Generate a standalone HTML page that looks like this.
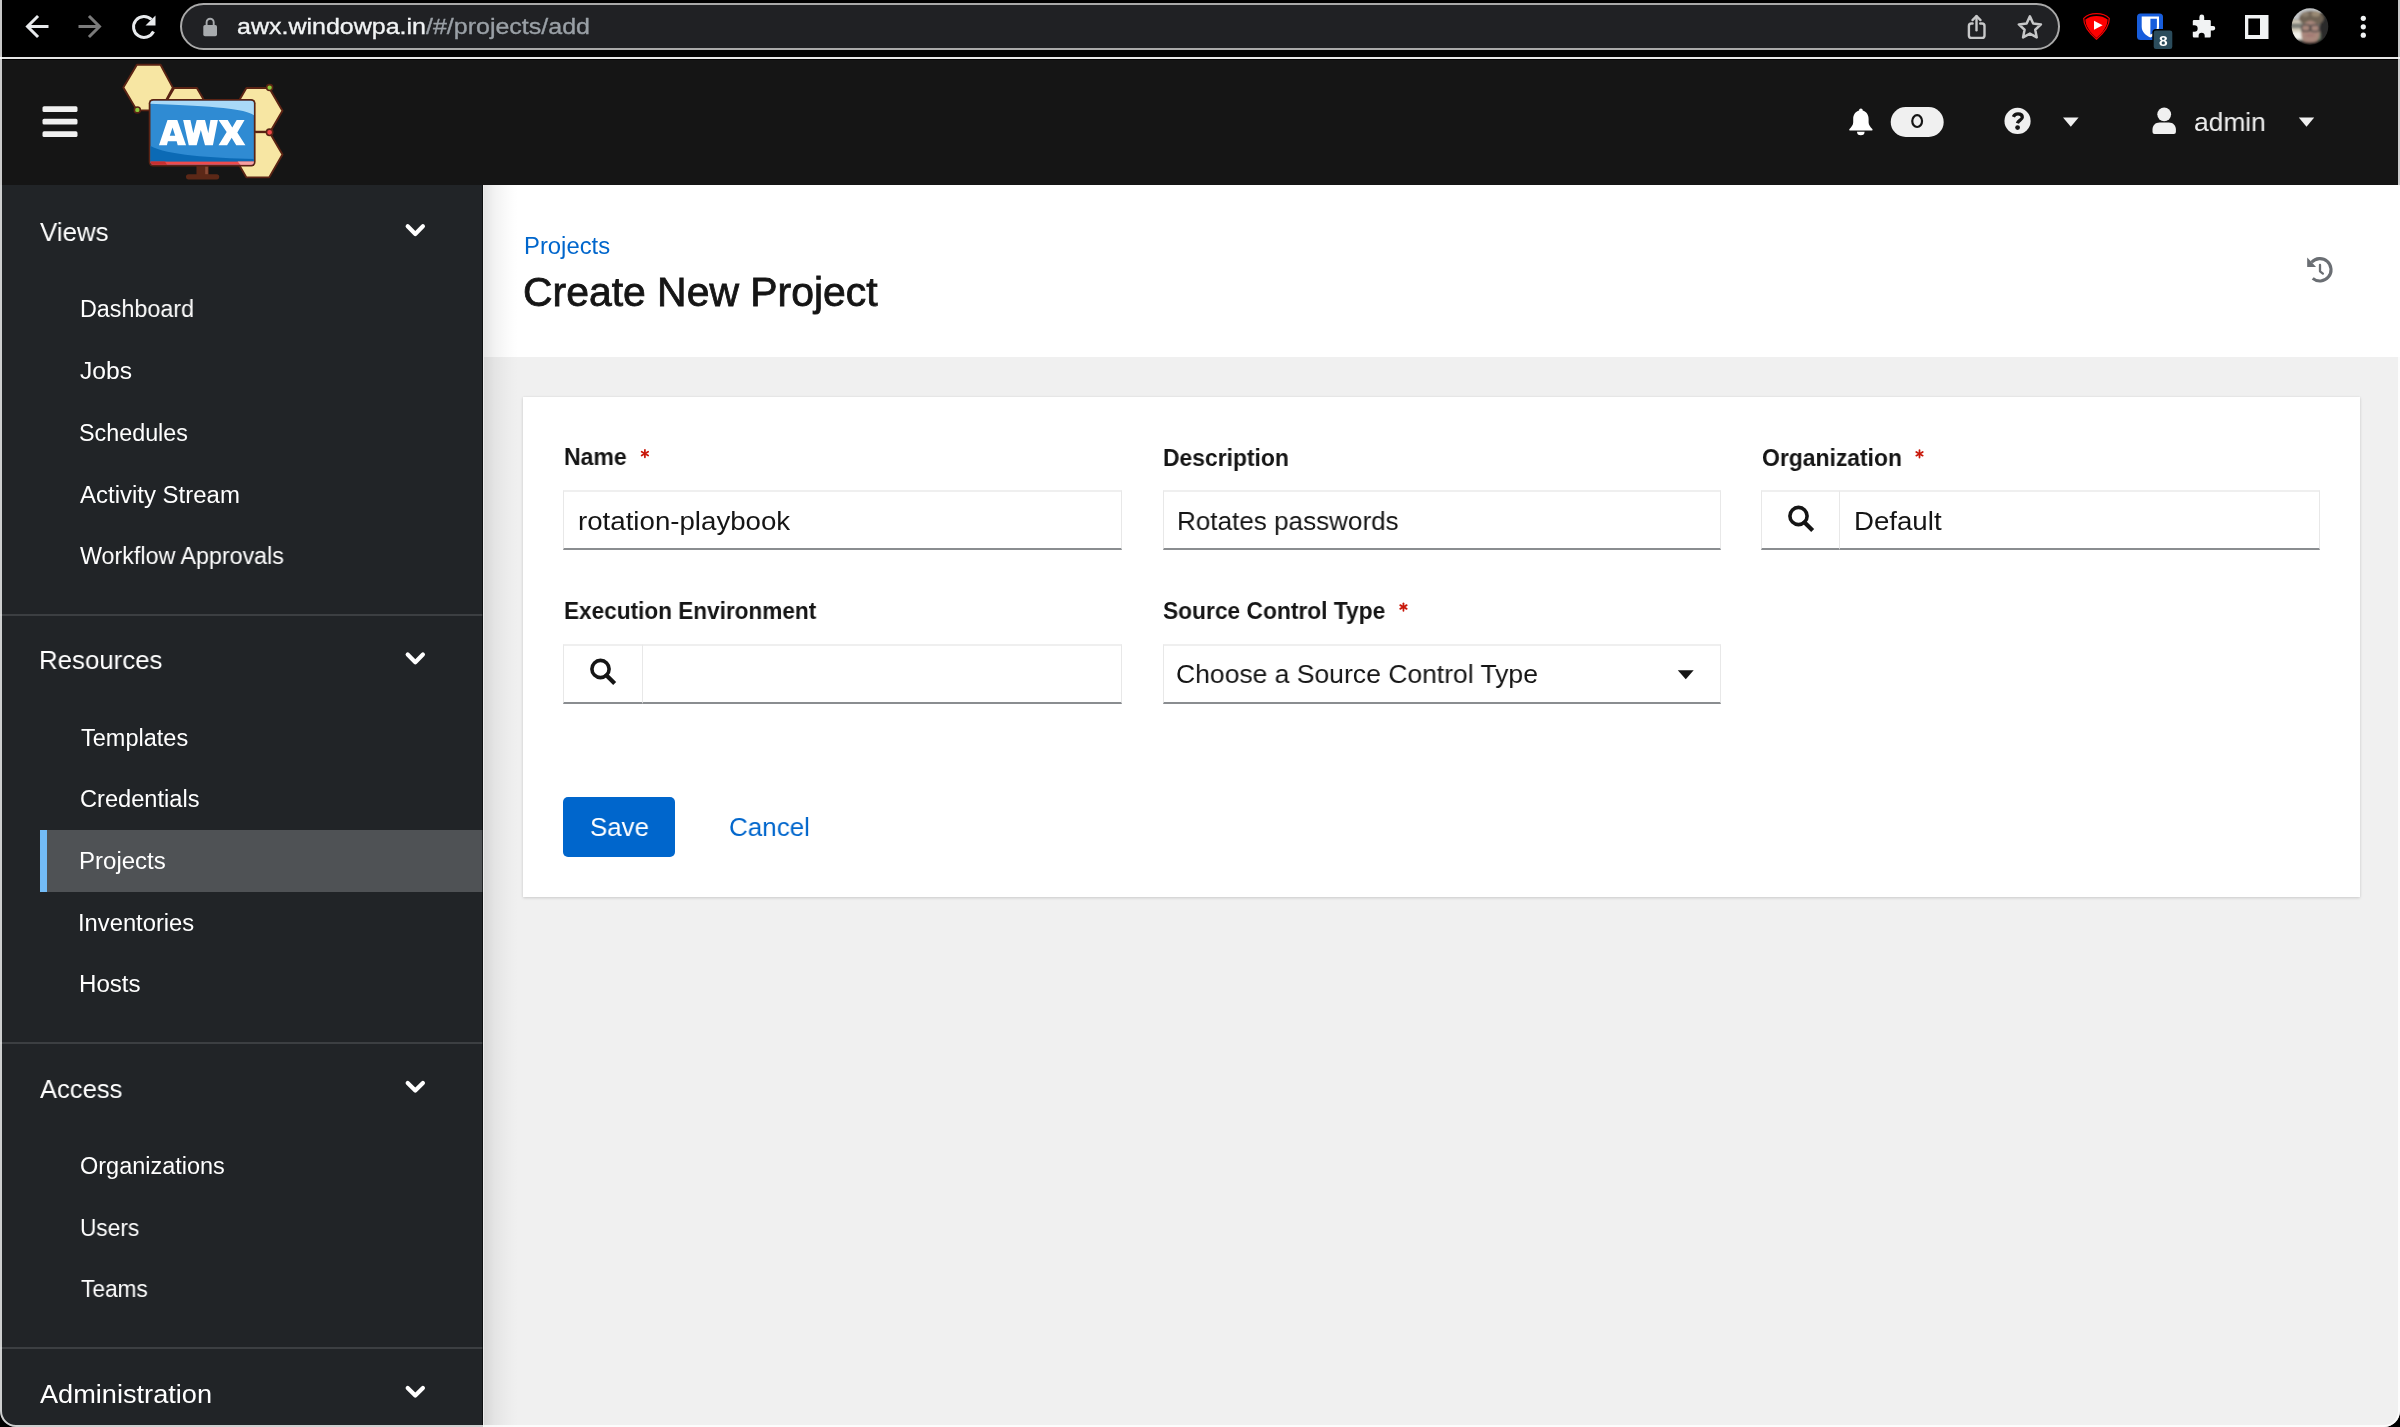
<!DOCTYPE html>
<html><head><meta charset="utf-8">
<style>
html,body{margin:0;padding:0;width:2400px;height:1427px;overflow:hidden;background:#000;}
body{font-family:"Liberation Sans", sans-serif;position:relative;}
.a{position:absolute;}
.t{position:absolute;white-space:nowrap;line-height:1;transform-origin:0 0;will-change:transform;}
svg{position:absolute;overflow:visible;}
</style></head><body>
<div class="a" id="win" style="left:0;top:0;width:2400px;height:1427px;border-radius:0 0 16px 16px;overflow:hidden;background:#000;">
<!-- chrome toolbar -->
<div class="a" style="left:0;top:0;width:2400px;height:57px;background:#000;"></div>
<div class="a" style="left:0;top:57px;width:2400px;height:2px;background:#e6e6e6;"></div>
<!-- url bar -->
<div class="a" style="left:180px;top:3px;width:1880px;height:47px;box-sizing:border-box;border:2px solid #a9a9a9;border-radius:24px;background:#202124;"></div>
<!-- masthead -->
<div class="a" style="left:0;top:60px;width:2400px;height:125px;background:#151515;"></div>
<!-- sidebar -->
<div class="a" style="left:0;top:185px;width:483px;height:1242px;background:#212427;"></div>
<div class="a" style="left:0;top:614px;width:483px;height:2px;background:#3c3f42;"></div>
<div class="a" style="left:0;top:1042px;width:483px;height:2px;background:#3c3f42;"></div>
<div class="a" style="left:0;top:1347px;width:483px;height:2px;background:#3c3f42;"></div>
<div class="a" style="left:40px;top:830px;width:443px;height:62px;background:#4f5255;"></div>
<div class="a" style="left:40px;top:830px;width:7px;height:62px;background:#73bcf7;"></div>
<!-- main -->
<div class="a" style="left:483px;top:185px;width:1917px;height:1242px;background:#f0f0f0;"></div>
<div class="a" style="left:483px;top:185px;width:1917px;height:172px;background:#fff;"></div>
<div class="a" style="left:484px;top:185px;width:34px;height:1242px;background:linear-gradient(to right,rgba(0,0,0,0.11),rgba(0,0,0,0.05) 30%,rgba(0,0,0,0.014) 70%,rgba(0,0,0,0));"></div>
<div class="a" style="left:482px;top:185px;width:1px;height:1242px;background:rgba(0,0,0,0.55);"></div>
<div class="a" style="left:483px;top:185px;width:1px;height:1242px;background:#ececec;"></div>
<!-- card -->
<div class="a" style="left:523px;top:397px;width:1837px;height:500px;background:#fff;box-shadow:0 1px 3px rgba(3,3,3,0.14),0 0 2px rgba(3,3,3,0.06);"></div>
<!-- inputs row1 -->
<div class="a" style="left:563px;top:490px;width:559px;height:60px;box-sizing:border-box;border-top:2px solid #efefef;border-left:1px solid #e8e8e8;border-right:1px solid #e8e8e8;border-bottom:2px solid #8a8d90;background:#fff;"></div>
<div class="a" style="left:1163px;top:490px;width:558px;height:60px;box-sizing:border-box;border-top:2px solid #efefef;border-left:1px solid #e8e8e8;border-right:1px solid #e8e8e8;border-bottom:2px solid #8a8d90;background:#fff;"></div>
<div class="a" style="left:1761px;top:490px;width:79px;height:60px;box-sizing:border-box;border-top:2px solid #efefef;border-left:1px solid #e8e8e8;border-right:1px solid #e8e8e8;border-bottom:2px solid #8a8d90;background:#fff;"></div>
<div class="a" style="left:1839px;top:490px;width:481px;height:60px;box-sizing:border-box;border-top:2px solid #efefef;border-left:1px solid #e8e8e8;border-right:1px solid #e8e8e8;border-bottom:2px solid #8a8d90;background:#fff;"></div>
<!-- inputs row2 -->
<div class="a" style="left:563px;top:644px;width:80px;height:60px;box-sizing:border-box;border-top:2px solid #efefef;border-left:1px solid #e8e8e8;border-right:1px solid #e8e8e8;border-bottom:2px solid #8a8d90;background:#fff;"></div>
<div class="a" style="left:642px;top:644px;width:480px;height:60px;box-sizing:border-box;border-top:2px solid #efefef;border-left:1px solid #e8e8e8;border-right:1px solid #e8e8e8;border-bottom:2px solid #8a8d90;background:#fff;"></div>
<div class="a" style="left:1163px;top:644px;width:558px;height:60px;box-sizing:border-box;border-top:2px solid #efefef;border-left:1px solid #e8e8e8;border-right:1px solid #e8e8e8;border-bottom:2px solid #8a8d90;background:#fff;"></div>
<!-- save -->
<div class="a" style="left:563px;top:797px;width:112px;height:60px;background:#0066cc;border-radius:5px;"></div>

<!-- ICONS -->
<!-- back -->
<svg style="left:0;top:0" width="200" height="57" viewBox="0 0 200 57">
  <g fill="none" stroke="#e8eaed" stroke-width="3" stroke-linecap="square">
    <path d="M47 26.5H28.5"/><path d="M37 17L27.5 26.5L37 36"/>
  </g>
  <g fill="none" stroke="#7b7b7b" stroke-width="3" stroke-linecap="square">
    <path d="M80 26.5H98.5"/><path d="M90 17L99.5 26.5L90 36"/>
  </g>
  <path d="M153.5 31.5A10.5 10.5 0 1 1 151.5 19.5" fill="none" stroke="#e8eaed" stroke-width="3"/>
  <path d="M155.5 15.5V25.5H145.5Z" fill="#e8eaed"/>
  <!-- lock -->
  <rect x="203.3" y="25" width="13.7" height="11.2" rx="1.7" fill="#a8abae"/>
  <path d="M206.6 25.5v-3.2a3.55 3.55 0 0 1 7.1 0v3.2" fill="none" stroke="#a8abae" stroke-width="1.9"/>
</svg>
<!-- share / star -->
<svg style="left:1950px;top:0" width="110" height="57" viewBox="1950 0 110 57">
  <g fill="none" stroke="#c7c8c9" stroke-width="2.4" stroke-linejoin="round" stroke-linecap="round">
    <path d="M1972.6 23.5H1971.4a2.5 2.5 0 0 0-2.5 2.5V35.4a2.5 2.5 0 0 0 2.5 2.5h10.6a2.5 2.5 0 0 0 2.5-2.5V26a2.5 2.5 0 0 0-2.5-2.5H1980.2"/>
    <path d="M1976.5 30.2V16.2"/><path d="M1972.5 20.1L1976.5 16.1L1980.5 20.1"/>
    <path d="M2029.90 16.40L2033.19 23.47L2040.93 24.42L2035.23 29.73L2036.72 37.38L2029.90 33.60L2023.08 37.38L2024.57 29.73L2018.87 24.42L2026.61 23.47Z" stroke-width="2.5"/>
  </g>
</svg>
<!-- extensions -->
<svg style="left:2070px;top:0" width="330" height="57" viewBox="2070 0 330 57">
  <path d="M2096.5 13.7C2101 13.7 2106 15 2109.3 18.3C2109.5 26 2104 33 2096.5 39.3C2089 33 2083.5 26 2083.7 18.3C2087 15 2092 13.7 2096.5 13.7Z" fill="none" stroke="#f20000" stroke-width="1.2"/>
  <path d="M2096.5 15.9C2100.5 15.9 2104.5 16.9 2107.6 19.6C2107.6 26.2 2103 32.5 2096.5 38C2090 32.5 2085.4 26.2 2085.4 19.6C2088.5 16.9 2092.5 15.9 2096.5 15.9Z" fill="#ff0000"/>
  <path d="M2094 20.8L2102.6 25.3L2094 29.8Z" fill="#fff"/>
  <!-- bitwarden -->
  <rect x="2137" y="13.5" width="26" height="26.5" rx="3.5" fill="#175ddc"/>
  <path d="M2141.7 16.4h17.3v10.3c0 5.5-4.6 8.8-8.65 10.8c-4.05-2-8.65-5.3-8.65-10.8z" fill="#fff"/>
  <path d="M2150.4 18.7h6.5v8.3c0 3.4-3 5.8-6.5 7.6z" fill="#175ddc"/>
  <rect x="2153" y="29.8" width="20" height="20" rx="3" fill="#2b4c5c" stroke="#000" stroke-width="1.4"/>
  <!-- puzzle -->
  <path d="M2192.8 21.1a1.2 1.2 0 0 1 1.2-1.2H2199.4V17a2.4 2.4 0 0 1 4.8 0V19.9H2209.6a1.2 1.2 0 0 1 1.2 1.2V26.1H2213.1a2.15 2.15 0 0 1 0 4.3H2210.8V36.3a1.2 1.2 0 0 1-1.2 1.2H2204.7V35.7a3.05 3.05 0 0 0-6.1 0V37.5H2194a1.2 1.2 0 0 1-1.2-1.2V31.7H2194.4a3.25 3.25 0 0 0 0-6.5H2192.8Z" fill="#f1f3f4"/>
  <!-- sidebar -->
  <path d="M2245 15h23.5v24H2245zM2248.3 18.5v16.5H2260V18.5z" fill="#f1f3f4" fill-rule="evenodd"/>
  <!-- avatar -->
  <defs>
    <clipPath id="av"><circle cx="2309.95" cy="26.6" r="18.3"/></clipPath>
    <filter id="avb" x="-10%" y="-10%" width="120%" height="120%"><feGaussianBlur stdDeviation="38"/></filter>
  </defs>
  <g clip-path="url(#av)">
    <g transform="translate(2288 5) scale(0.030836)" filter="url(#avb)">
      <rect x="0" y="0" width="1427" height="1427" fill="#9c978c"/>
      <rect x="0" y="0" width="1427" height="460" fill="#c3c6c8"/>
      <rect x="1030" y="240" width="400" height="1200" fill="#2a2a2a"/>
      <rect x="0" y="500" width="440" height="640" fill="#d6cfbe"/>
      <rect x="0" y="590" width="440" height="170" fill="#7e8179"/>
      <rect x="120" y="880" width="320" height="240" fill="#f2f1ea"/>
      <rect x="920" y="900" width="140" height="260" fill="#6d7d69"/>
      <ellipse cx="760" cy="430" rx="400" ry="240" fill="#6f6355"/>
      <ellipse cx="900" cy="290" rx="140" ry="90" fill="#9a8a74"/>
      <ellipse cx="560" cy="300" rx="120" ry="80" fill="#8d8070"/>
      <ellipse cx="725" cy="900" rx="300" ry="390" fill="#a9877b"/>
      <rect x="440" y="640" width="270" height="210" rx="70" fill="none" stroke="#4e4848" stroke-width="48"/>
      <rect x="740" y="650" width="270" height="210" rx="70" fill="none" stroke="#4e4848" stroke-width="48"/>
      <ellipse cx="720" cy="985" rx="150" ry="32" fill="#a07070"/>
      <path d="M0 1130H420C520 1250 900 1250 1000 1130H1427V1427H0Z" fill="#161616"/>
    </g>
  </g>
  <circle cx="2363.3" cy="18.3" r="2.6" fill="#f1f3f4"/>
  <circle cx="2363.3" cy="26.8" r="2.6" fill="#f1f3f4"/>
  <circle cx="2363.3" cy="35.2" r="2.6" fill="#f1f3f4"/>
</svg>
<!-- bitwarden badge 8 -->
<div class="t" style="left:2159.2px;top:32.8px;font-size:15.5px;font-weight:700;color:#fff;">8</div>

<!-- hamburger -->
<svg style="left:0;top:59px" width="100" height="126" viewBox="0 59 100 126">
  <rect x="42.5" y="106.2" width="35" height="5.8" rx="1.6" fill="#f0f0f0"/>
  <rect x="42.5" y="118.8" width="35" height="5.8" rx="1.6" fill="#f0f0f0"/>
  <rect x="42.5" y="131.3" width="35" height="5.8" rx="1.6" fill="#f0f0f0"/>
</svg>
<!-- logo -->
<svg style="left:115px;top:60px" width="180" height="125" viewBox="0 0 2055 1427">
  <g stroke="#5a2314" stroke-width="22" stroke-linejoin="round" fill="#f7e6a3">
    <path d="M95 315L250 55H520L660 315L520 575H250Z"/>
    <path d="M523 580L675 320H935L1087 580L935 840H675Z"/>
    <path d="M1348 580L1500 320H1760L1912 580L1760 840H1500Z"/>
    <path d="M1348 1080L1500 820H1760L1912 1080L1760 1340H1500Z"/>
  </g>
  <path d="M1605 825H1765" stroke="#5a2314" stroke-width="20"/>
  <!-- stand -->
  <rect x="930" y="1200" width="140" height="120" fill="#5c2817"/>
  <rect x="1030" y="1215" width="30" height="95" fill="#8a4a35"/>
  <rect x="810" y="1305" width="380" height="58" rx="29" fill="#5c2817"/>
  <!-- monitor -->
  <rect x="385" y="445" width="1220" height="770" rx="50" fill="#5a2314"/>
  <clipPath id="scr"><rect x="405" y="465" width="1180" height="730" rx="34"/></clipPath>
  <g clip-path="url(#scr)">
    <rect x="400" y="460" width="1200" height="740" fill="#2f8bd3"/>
    <path d="M400 460H1600V640C1500 560 1200 530 400 500Z" fill="#a9d9f7"/>
    <path d="M400 980C600 1090 1100 1120 1600 1130V1200H400Z" fill="#0b6ab5"/>
    <rect x="400" y="1160" width="1200" height="45" fill="#f04b4b"/>
    <path d="M400 1160H570L600 1205H400Z" fill="#c92f2f"/>
    <path d="M1400 1160H1600V1205H1440Z" fill="#f7a0a0"/>
  </g>
  <g stroke="#5a2314" stroke-width="18">
    <circle cx="255" cy="570" r="34" fill="#8fc93a"/>
    <circle cx="1765" cy="315" r="34" fill="#8fc93a"/>
    <circle cx="1765" cy="825" r="36" fill="#ef4848"/>
  </g>
</svg>

<svg style="left:155px;top:112px" width="100" height="38" viewBox="0 0 2400 912">
  <path fill="#fff" fill-rule="evenodd" d="M95 795L300 190H535L745 795H545L520 700H310L285 795Z M355 570L420 370L485 570Z"/>
  <path fill="#fff" d="M675 190H850L920 510L1000 190H1200L1280 510L1330 190H1510L1390 795H1200L1100 430L1000 795H810Z"/>
  <path fill="#fff" d="M1525 190H1745L1855 370L1960 190H2150L1975 490L2170 795H1950L1840 615L1730 795H1525L1720 480Z"/>
</svg>
<!-- header right icons -->
<svg style="left:1830px;top:59px" width="570" height="126" viewBox="1830 59 570 126">
  <!-- bell -->
  <path d="M1860.9 108.4c1 0 1.8 .8 1.8 1.8v.4c3.7 1 5.9 4.4 5.9 8.3v3.3c0 2.7 1.7 4.7 3.7 6.8c.6 .7 .2 1.6-.7 1.6H1850.2c-.9 0-1.3-.9-.7-1.6c2-2.1 3.7-4.1 3.7-6.8v-3.3c0-3.9 2.2-7.3 5.9-8.3v-.4c0-1 .8-1.8 1.8-1.8z" fill="#fff"/>
  <path d="M1857 131.8h7.6a3.8 3.5 0 0 1-7.6 0z" fill="#fff"/>
  <rect x="1890.7" y="107" width="53" height="30" rx="15" fill="#f0f0f0"/>
  <ellipse cx="1917.15" cy="121.1" rx="4.9" ry="5.9" fill="none" stroke="#151515" stroke-width="2.2"/>
  <!-- question -->
  <circle cx="2017.55" cy="120.95" r="13.1" fill="#f0f0f0"/>
  <path d="M2013.4 116.9C2014.3 114.6 2015.9 113.9 2018 113.9C2020.7 113.9 2022.3 115.4 2022.3 117.3C2022.3 119.9 2018.3 120.3 2017.4 123.3" fill="none" stroke="#151515" stroke-width="3.3"/>
  <circle cx="2017.6" cy="127.6" r="2.4" fill="#151515"/>
  <path d="M2063 117.5H2078.6L2070.8 126.8Z" fill="#f0f0f0"/>
  <!-- user -->
  <circle cx="2164.2" cy="114.3" r="6.9" fill="#f0f0f0"/>
  <path d="M2152.5 132v-2.6c0-4.2 3-7 7-7h9.4c4 0 7 2.8 7 7v2.6a2 2 0 0 1-2 2H2154.5a2 2 0 0 1-2-2z" fill="#f0f0f0"/>
  <path d="M2298.8 117.5H2314.2L2306.5 126.8Z" fill="#f0f0f0"/>
</svg>

<!-- chevrons -->
<svg style="left:390px;top:200px" width="60" height="1220" viewBox="390 200 60 1220">
  <g fill="none" stroke="#fff" stroke-width="4.2" stroke-linecap="round" stroke-linejoin="round">
    <path d="M407.7 226.3L415.3 233.9L422.9 226.3"/>
    <path d="M407.7 654.6L415.3 662.2L422.9 654.6"/>
    <path d="M407.7 1082.9L415.3 1090.5L422.9 1082.9"/>
    <path d="M407.7 1387.9L415.3 1395.5L422.9 1387.9"/>
  </g>
</svg>

<!-- history icon -->
<svg style="left:2300px;top:250px" width="40" height="40" viewBox="2300 250 40 40">
  <path d="M2312.7 278.4A11.2 11.2 0 1 0 2311.6 262.2" fill="none" stroke="#6a6e73" stroke-width="3.1"/>
  <path d="M2307.2 257.6V266.9H2316.1Z" fill="#6a6e73"/>
  <path d="M2320 265v6.3l2.9 2.3" fill="none" stroke="#6a6e73" stroke-width="2.3" stroke-linecap="round" stroke-linejoin="round"/>
</svg>
<!-- search icons -->
<svg style="left:1780px;top:500px" width="40" height="40" viewBox="0 0 40 40">
  <circle cx="18.5" cy="16" r="8.6" fill="none" stroke="#151515" stroke-width="3.6"/>
  <path d="M24.6 22.4L31.2 29" stroke="#151515" stroke-width="4.2" stroke-linecap="square"/>
</svg>
<svg style="left:582px;top:653px" width="40" height="40" viewBox="0 0 40 40">
  <circle cx="18.5" cy="16" r="8.6" fill="none" stroke="#151515" stroke-width="3.6"/>
  <path d="M24.6 22.4L31.2 29" stroke="#151515" stroke-width="4.2" stroke-linecap="square"/>
</svg>
<!-- select caret -->
<svg style="left:1670px;top:660px" width="40" height="30" viewBox="1670 660 40 30">
  <path d="M1677.8 670.3H1693.7L1685.75 679.3Z" fill="#151515"/>
</svg>

<!-- asterisks -->
<svg style="left:0;top:0" width="2400" height="1427" viewBox="0 0 2400 1427"><g stroke="#c9190b" stroke-width="1.75" stroke-linecap="round"><path d="M644.90 449.85L644.90 457.35"/><path d="M641.65 451.73L648.15 455.48"/><path d="M641.65 455.48L648.15 451.73"/><path d="M1919.50 450.05L1919.50 457.55"/><path d="M1916.25 451.93L1922.75 455.68"/><path d="M1916.25 455.68L1922.75 451.93"/><path d="M1403.45 603.25L1403.45 610.75"/><path d="M1400.20 605.12L1406.70 608.88"/><path d="M1400.20 608.88L1406.70 605.12"/></g></svg>

<div class="t" style="left:236.90px;top:16.47px;font-size:22.6px;font-weight:400;transform:scaleX(1.1063);-webkit-text-stroke:0.35px currentColor;"><span style="color:#f1f3f4">awx.windowpa.in</span><span style="color:#9aa0a6">/#/projects/add</span></div>
<div class="t" style="left:2194.01px;top:109.02px;font-size:26.67px;font-weight:400;transform:scaleX(0.9890);"><span style="color:#f0f0f0">admin</span></div>
<div class="t" style="left:40.00px;top:219.02px;font-size:26.67px;font-weight:400;transform:scaleX(0.9716);"><span style="color:#ffffff">Views</span></div>
<div class="t" style="left:39.36px;top:647.32px;font-size:26.67px;font-weight:400;transform:scaleX(0.9690);"><span style="color:#ffffff">Resources</span></div>
<div class="t" style="left:40.30px;top:1075.52px;font-size:26.67px;font-weight:400;transform:scaleX(0.9592);"><span style="color:#ffffff">Access</span></div>
<div class="t" style="left:40.30px;top:1380.62px;font-size:26.67px;font-weight:400;transform:scaleX(1.0186);"><span style="color:#ffffff">Administration</span></div>
<div class="t" style="left:79.60px;top:298.35px;font-size:23.33px;font-weight:400;transform:scaleX(0.9978);"><span style="color:#ffffff">Dashboard</span></div>
<div class="t" style="left:80.00px;top:360.25px;font-size:23.33px;font-weight:400;transform:scaleX(1.0543);"><span style="color:#ffffff">Jobs</span></div>
<div class="t" style="left:79.20px;top:421.85px;font-size:23.33px;font-weight:400;transform:scaleX(0.9993);"><span style="color:#ffffff">Schedules</span></div>
<div class="t" style="left:80.00px;top:483.65px;font-size:23.33px;font-weight:400;transform:scaleX(1.0278);"><span style="color:#ffffff">Activity Stream</span></div>
<div class="t" style="left:80.00px;top:545.45px;font-size:23.33px;font-weight:400;transform:scaleX(0.9974);"><span style="color:#ffffff">Workflow Approvals</span></div>
<div class="t" style="left:80.60px;top:726.65px;font-size:23.33px;font-weight:400;transform:scaleX(1.0080);"><span style="color:#ffffff">Templates</span></div>
<div class="t" style="left:79.59px;top:787.95px;font-size:23.33px;font-weight:400;transform:scaleX(1.0126);"><span style="color:#ffffff">Credentials</span></div>
<div class="t" style="left:79.37px;top:850.05px;font-size:23.33px;font-weight:400;transform:scaleX(1.0302);"><span style="color:#ffffff">Projects</span></div>
<div class="t" style="left:78.36px;top:911.65px;font-size:23.33px;font-weight:400;transform:scaleX(1.0184);"><span style="color:#ffffff">Inventories</span></div>
<div class="t" style="left:79.37px;top:973.35px;font-size:23.33px;font-weight:400;transform:scaleX(1.0334);"><span style="color:#ffffff">Hosts</span></div>
<div class="t" style="left:79.59px;top:1154.60px;font-size:23.33px;font-weight:400;transform:scaleX(1.0062);"><span style="color:#ffffff">Organizations</span></div>
<div class="t" style="left:79.73px;top:1216.65px;font-size:23.33px;font-weight:400;transform:scaleX(0.9721);"><span style="color:#ffffff">Users</span></div>
<div class="t" style="left:80.70px;top:1278.35px;font-size:23.33px;font-weight:400;transform:scaleX(0.9729);"><span style="color:#ffffff">Teams</span></div>
<div class="t" style="left:523.58px;top:234.85px;font-size:23.33px;font-weight:400;transform:scaleX(1.0217);"><span style="color:#0066cc">Projects</span></div>
<div class="t" style="left:522.56px;top:271.74px;font-size:40px;font-weight:400;transform:scaleX(1.0224);-webkit-text-stroke:0.8px #151515;"><span style="color:#151515">Create New Project</span></div>
<div class="t" style="left:563.71px;top:446.45px;font-size:23.33px;font-weight:700;transform:scaleX(0.9878);"><span style="color:#151515">Name</span></div>
<div class="t" style="left:1162.77px;top:447.10px;font-size:23.33px;font-weight:700;transform:scaleX(0.9815);"><span style="color:#151515">Description</span></div>
<div class="t" style="left:1762.20px;top:446.65px;font-size:23.33px;font-weight:700;transform:scaleX(0.9822);"><span style="color:#151515">Organization</span></div>
<div class="t" style="left:563.78px;top:600.25px;font-size:23.33px;font-weight:700;transform:scaleX(0.9682);"><span style="color:#151515">Execution Environment</span></div>
<div class="t" style="left:1162.75px;top:600.25px;font-size:23.33px;font-weight:700;transform:scaleX(0.9760);"><span style="color:#151515">Source Control Type</span></div>
<div class="t" style="left:578.36px;top:508.02px;font-size:26.67px;font-weight:400;transform:scaleX(1.0377);"><span style="color:#151515">rotation-playbook</span></div>
<div class="t" style="left:1177.04px;top:507.52px;font-size:26.67px;font-weight:400;transform:scaleX(0.9779);"><span style="color:#151515">Rotates passwords</span></div>
<div class="t" style="left:1853.83px;top:507.72px;font-size:26.67px;font-weight:400;transform:scaleX(1.0367);"><span style="color:#151515">Default</span></div>
<div class="t" style="left:1175.91px;top:660.52px;font-size:26.67px;font-weight:400;transform:scaleX(0.9943);"><span style="color:#151515">Choose a Source Control Type</span></div>
<div class="t" style="left:589.63px;top:814.12px;font-size:26.67px;font-weight:400;transform:scaleX(0.9698);"><span style="color:#ffffff">Save</span></div>
<div class="t" style="left:728.72px;top:814.02px;font-size:26.67px;font-weight:400;transform:scaleX(0.9753);"><span style="color:#0066cc">Cancel</span></div>
</div>
<div class="a" style="left:0;top:-4px;width:2400px;height:1431px;box-sizing:border-box;border:2px solid rgba(255,255,255,0.78);border-radius:0 0 16px 16px;"></div>
</body></html>
